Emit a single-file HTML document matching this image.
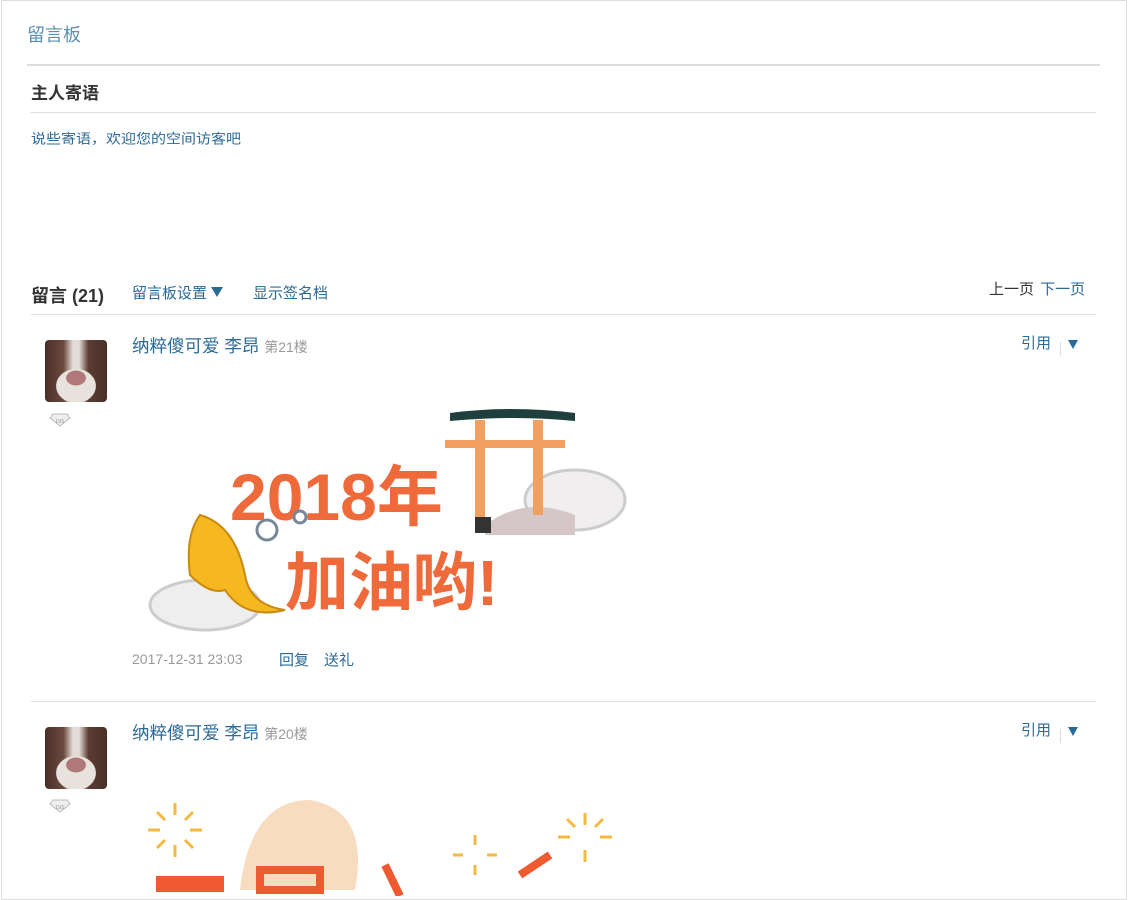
<!DOCTYPE html>
<html><head><meta charset="utf-8"><style>
*{margin:0;padding:0;box-sizing:border-box}
body{width:1130px;height:896px;overflow:hidden;background:#fff;font-family:"Liberation Sans","Noto Sans CJK SC",sans-serif;position:relative}
.frame{position:absolute;left:1px;top:0;width:1126px;height:900px;border:1px solid #ddd}
.a{position:absolute;white-space:nowrap}
.l{color:#2a6a96}
.hr{position:absolute;background:#ddd;height:1px}
.av{position:absolute;width:62px;height:62px;border-radius:4px;background:radial-gradient(ellipse 12px 9px at 31px 38px,#b07878 80%,transparent 85%),radial-gradient(ellipse 28px 24px at 31px 46px,#e8e2dc 70%,transparent 72%),linear-gradient(90deg,#4a3028 0,#6b4a3e 30%,#e4dcd6 45%,#e4dcd6 55%,#5a3c34 70%,#4a3028)}
.dia{position:absolute;width:22px;height:14px}
.tri{display:inline-block;width:0;height:0;border-left:6px solid transparent;border-right:6px solid transparent;border-top:10px solid #2a6a96;vertical-align:1px}
</style></head><body>
<div class="frame"></div>
<div class="a" style="left:27px;top:21px;font-size:18px;color:#5b8fb2">留言板</div>
<div class="hr" style="left:27px;top:64px;width:1073px;height:2px"></div>
<div class="a" style="left:31px;top:79px;font-size:17px;font-weight:bold;color:#333">主人寄语</div>
<div class="hr" style="left:31px;top:112px;width:1065px"></div>
<div class="a l" style="left:31px;top:129px;font-size:15px;transform:scaleY(.9);transform-origin:0 0">说些寄语，欢迎您的空间访客吧</div>

<div class="a" style="left:31px;top:282px;font-size:18px;font-weight:bold;color:#333">留言 (21)</div>
<div class="a l" style="left:132px;top:282px;font-size:15px">留言板设置 <span class="tri"></span></div>
<div class="a l" style="left:253px;top:282px;font-size:15px">显示签名档</div>
<div class="a" style="left:989px;top:278px;font-size:15px;color:#333">上一页 <span class="l" style="margin-left:2px">下一页</span></div>
<div class="hr" style="left:31px;top:314px;width:1065px"></div>

<!-- entry 1 -->
<div class="av" style="left:45px;top:340px"></div>
<svg class="dia" style="left:49px;top:413px" viewBox="0 0 22 14"><path d="M4 1h14l3 4-10 8L1 5z" fill="#eee" stroke="#bbb"/><text x="11" y="10" font-size="5" text-anchor="middle" fill="#888">LV1</text></svg>
<div class="a l" style="left:132px;top:333px;font-size:17.5px">纳粹傻可爱 李昂 <span style="font-size:14px;color:#999">第21楼</span></div>
<div class="a l" style="left:1021px;top:332px;font-size:15px">引用</div>
<div class="hr" style="left:1060px;top:342px;width:1px;height:14px"></div>
<div class="a" style="left:1068px;top:337px"><span class="tri" style="border-left-width:5px;border-right-width:5px;border-top-width:9px"></span></div>
<svg class="a" style="left:145px;top:405px" width="490" height="230" viewBox="0 0 490 230">
<ellipse cx="60" cy="200" rx="55" ry="25" fill="#eee" stroke="#ccc" stroke-width="3"/>
<ellipse cx="430" cy="95" rx="50" ry="30" fill="#f0eeee" stroke="#ccc" stroke-width="3"/>
<path d="M340 120q40-30 90-10l0 20-90 0z" fill="#d5c7c7"/>
<path d="M305 8q60-8 125 0l0 8q-60-6-125 0z" fill="#1f3f3f"/>
<rect x="300" y="35" width="120" height="8" fill="#f0a060"/>
<rect x="330" y="15" width="10" height="100" fill="#f0a060"/>
<rect x="388" y="15" width="10" height="95" fill="#f0a060"/>
<rect x="330" y="112" width="16" height="16" fill="#333"/>
<text x="85" y="115" font-size="66" font-weight="bold" fill="#ef6a3a" font-family="Liberation Sans,Noto Sans CJK SC,sans-serif">2018年</text>
<text x="140" y="200" font-size="64" font-weight="bold" fill="#ef6a3a" font-family="Liberation Sans,Noto Sans CJK SC,sans-serif">加油哟!</text>
<path d="M55 110q35 10 45 60q5 30 40 35q-40 10-60-20q-15 5-35 -15q-5-40 10-60z" fill="#f5b820" stroke="#c88a10" stroke-width="2"/>
<circle cx="122" cy="125" r="10" fill="#fff" stroke="#789" stroke-width="3"/>
<circle cx="155" cy="112" r="6" fill="#fff" stroke="#789" stroke-width="3"/>
</svg>
<div class="a" style="left:132px;top:651px;font-size:14px;color:#999">2017-12-31 23:03</div>
<div class="a l" style="left:279px;top:649px;font-size:15px">回复</div>
<div class="a l" style="left:324px;top:649px;font-size:15px">送礼</div>
<div class="hr" style="left:31px;top:701px;width:1065px"></div>

<!-- entry 2 -->
<div class="av" style="left:45px;top:727px"></div>
<svg class="dia" style="left:49px;top:799px" viewBox="0 0 22 14"><path d="M4 1h14l3 4-10 8L1 5z" fill="#eee" stroke="#bbb"/><text x="11" y="10" font-size="5" text-anchor="middle" fill="#888">LV1</text></svg>
<div class="a l" style="left:132px;top:720px;font-size:17.5px">纳粹傻可爱 李昂 <span style="font-size:14px;color:#999">第20楼</span></div>
<div class="a l" style="left:1021px;top:719px;font-size:15px">引用</div>
<div class="hr" style="left:1060px;top:729px;width:1px;height:14px"></div>
<div class="a" style="left:1068px;top:724px"><span class="tri" style="border-left-width:5px;border-right-width:5px;border-top-width:9px"></span></div>
<svg class="a" style="left:140px;top:795px" width="490" height="101" viewBox="0 0 490 101">
<g stroke="#f5b840" stroke-width="3"><path d="M35 20v-12M35 50v12M20 35h-12M50 35h12M25 25l-8-8M45 25l8-8M25 45l-8 8M45 45l8 8"/>
<path d="M445 30v-12M445 55v12M430 42h-12M460 42h12M435 32l-8-8M455 32l8-8"/>
<path d="M335 50v-10M335 70v10M323 60h-10M347 60h10"/></g>
<path d="M100 95q10-90 70-90q60 10 45 90z" fill="#f8dcc0"/>
<path d="M20 85h60v8h-60zM120 75h60v20h-60zM245 70l15 31M380 80l30-20" stroke="#ef5a30" stroke-width="8" fill="none"/>
</svg>
</body></html>
